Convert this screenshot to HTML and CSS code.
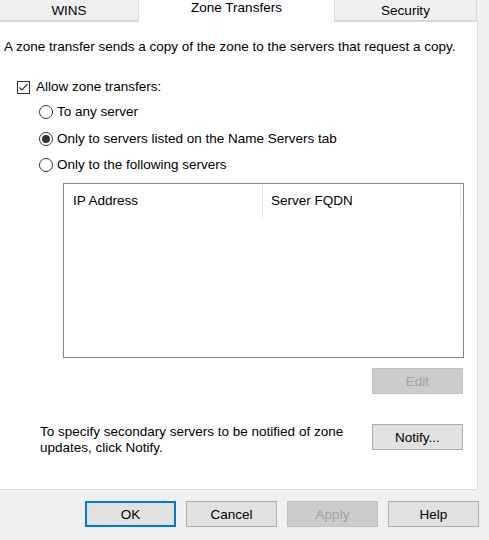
FILE: index.html
```html
<!DOCTYPE html>
<html lang="en">
  <head>
    <meta charset="utf-8">
    <title>Zone Transfers</title>
    <link rel="stylesheet" href="styles.css">
  </head>
  <body>
    <div class="dialog">
      <div class="tabs">
        <div class="tab tab-wins">WINS</div>
        <div class="tab tab-active">Zone Transfers</div>
        <div class="tab tab-security">Security</div>
      </div>

      <div class="panel">
        <p class="intro">A zone transfer sends a copy of the zone to the servers that request a copy.</p>

        <div class="check-row">
          <span class="checkbox">
            <svg width="11" height="11" viewBox="0 0 11 11"><path d="M1.5 5.5 L4 8 L9.5 2" fill="none" stroke="#333" stroke-width="1.2"/></svg>
          </span>
          <span>Allow zone transfers:</span>
        </div>

        <div class="radios">
          <div class="radio-row"><span class="radio"></span><span>To any server</span></div>
          <div class="radio-row"><span class="radio checked"></span><span>Only to servers listed on the Name Servers tab</span></div>
          <div class="radio-row"><span class="radio"></span><span>Only to the following servers</span></div>
        </div>

        <div class="listbox">
          <div class="list-head">
            <div class="col col-ip">IP Address</div>
            <div class="col col-fqdn">Server FQDN</div>
          </div>
        </div>

        <div class="edit-row">
          <button type="button" class="button disabled">Edit</button>
        </div>

        <div class="notify-row">
          <p>To specify secondary servers to be notified of zone<br>updates, click Notify.</p>
          <button type="button" class="button">Notify...</button>
        </div>
      </div>

      <div class="actions">
        <button type="button" class="button default">OK</button>
        <button type="button" class="button">Cancel</button>
        <button type="button" class="button disabled">Apply</button>
        <button type="button" class="button">Help</button>
      </div>
    </div>
  </body>
</html>
```

FILE: styles.css
```css
body {
    margin: 0;
    background: #f0f0f0;
    font: 13.5px/16px "Liberation Sans", Arial, sans-serif;
    color: #000;
}
.dialog {
    width: 489px;
    height: 540px;
    overflow: hidden;
}
.tabs {
    display: flex;
    height: 21px;
}
.tab {
    box-sizing: border-box;
    height: 21px;
    padding-top: 3px;
    text-align: center;
    background: #f0f0f0;
    border: 1px solid #d9d9d9;
    border-top: none;
}
.tab-wins {
    width: 139px;
    border-left: none;
}
.tab-active {
    width: 195px;
    height: 22px;
    padding-top: 0;
    background: #fff;
    border: none;
    position: relative;
    z-index: 1;
}
.tab-security {
    width: 143px;
}
.panel {
    box-sizing: border-box;
    width: 478px;
    height: 469px;
    background: #fff;
    border: 1px solid #d9d9d9;
    border-left: none;
    padding: 0 0 0 4px;
}
.intro {
    margin: 17px 0 0;
}
.check-row {
    display: flex;
    align-items: center;
    gap: 6px;
    margin: 24px 0 0 13px;
}
.checkbox {
    box-sizing: border-box;
    width: 13px;
    height: 13px;
    border: 1px solid #333;
    display: flex;
    align-items: center;
    justify-content: center;
}
.radios {
    margin: 9px 0 0 35px;
    display: flex;
    flex-direction: column;
    gap: 10.5px;
}
.radio-row {
    display: flex;
    align-items: center;
    gap: 4px;
    height: 16px;
}
.radio {
    box-sizing: border-box;
    width: 14px;
    height: 14px;
    border: 1px solid #333;
    border-radius: 50%;
    display: flex;
    align-items: center;
    justify-content: center;
}
.radio.checked::after {
    content: "";
    width: 8px;
    height: 8px;
    border-radius: 50%;
    background: #333;
}
.listbox {
    box-sizing: border-box;
    width: 401px;
    height: 175px;
    margin: 10px 0 0 59px;
    border: 1px solid #828790;
}
.list-head {
    display: flex;
    height: 34px;
}
.col {
    box-sizing: border-box;
    padding: 9px 0 0 9px;
    border-right: 1px solid #e5e5e5;
}
.col-ip {
    width: 199px;
}
.col-fqdn {
    width: 198px;
    padding-left: 8px;
}
.button {
    box-sizing: border-box;
    width: 91px;
    height: 26px;
    font: 13.5px "Liberation Sans", Arial, sans-serif;
    color: #000;
    background: #e1e1e1;
    border: 1px solid #adadad;
    padding: 0;
}
.button.disabled {
    background: #cccccc;
    border-color: #bfbfbf;
    color: #a0a0a0;
}
.button.default {
    border: 2px solid #0078d7;
}
.edit-row {
    display: flex;
    justify-content: flex-end;
    padding-right: 14px;
    margin-top: 10px;
}
.notify-row {
    display: flex;
    justify-content: space-between;
    align-items: flex-start;
    padding: 0 14px 0 36px;
    margin-top: 30px;
}
.notify-row p {
    margin: 0;
}
.actions {
    display: flex;
    gap: 10px;
    padding: 11px 0 0 85px;
}
```
